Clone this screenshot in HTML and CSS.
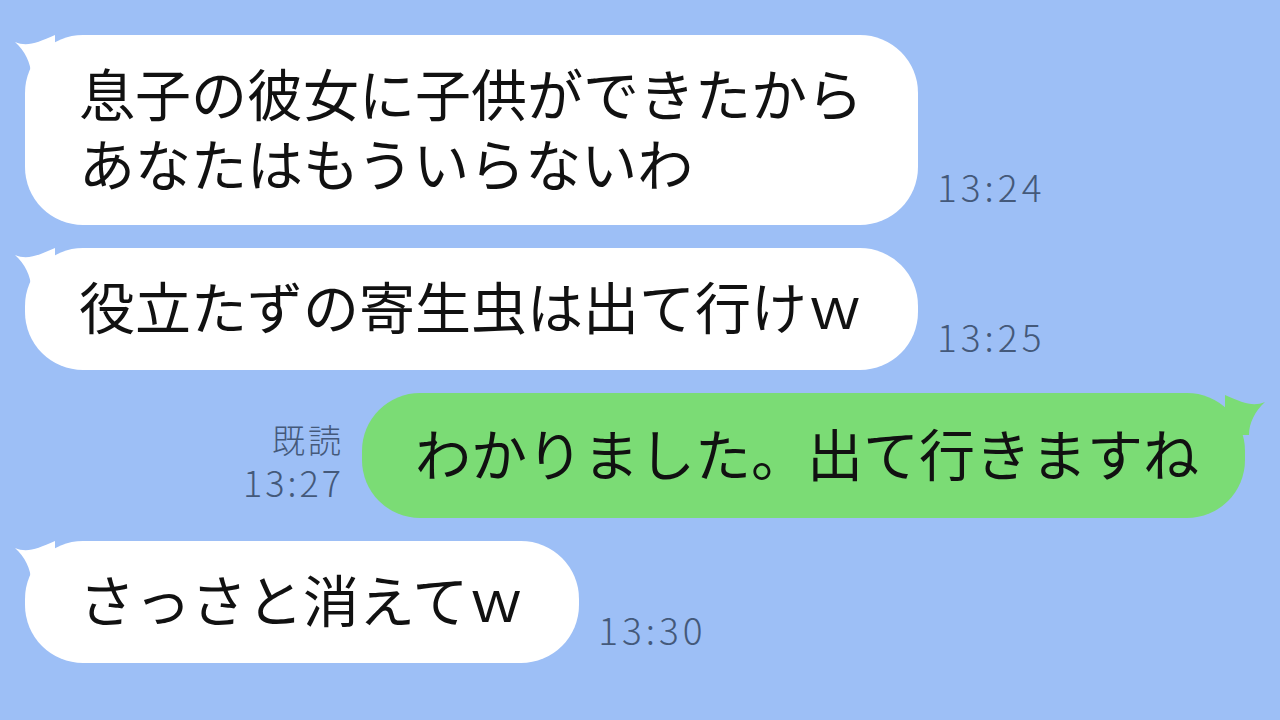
FILE: index.html
```html
<!DOCTYPE html>
<html lang="ja">
<head>
  <meta charset="UTF-8">
  <title>トーク</title>
  <link rel="stylesheet" href="styles.css">
</head>
<body>

  <div class="chat">
    <!-- 相手 -->
    <div class="row">
      <div class="bubble left two">
        <svg class="tail tail-l" width="50" height="50" viewBox="0 0 50 50">
          <path d="M0 7 C12 12 22 8 40 0 L40 40 L16 40 C16 28 10 16 0 7 Z"></path>
        </svg>
        <p>息子の彼女に子供ができたから<br>あなたはもういらないわ</p>
      </div>
      <div class="meta high"><span>13:24</span></div>
    </div>

    <div class="row">
      <div class="bubble left">
        <svg class="tail tail-l" width="50" height="50" viewBox="0 0 50 50">
          <path d="M0 7 C12 12 22 8 40 0 L40 40 L16 40 C16 28 10 16 0 7 Z"></path>
        </svg>
        <p>役立たずの寄生虫は出て行けｗ</p>
      </div>
      <div class="meta"><span>13:25</span></div>
    </div>

    <!-- 自分 -->
    <div class="row mine">
      <div class="meta">
        <span class="read">既読</span>
        <span>13:27</span>
      </div>
      <div class="bubble right">
        <svg class="tail tail-r" width="50" height="50" viewBox="0 0 50 50">
          <path d="M50 7 C38 12 28 8 10 0 L10 40 L34 40 C34 28 40 16 50 7 Z"></path>
        </svg>
        <p>わかりました。出て行きますね</p>
      </div>
    </div>

    <div class="row">
      <div class="bubble left">
        <svg class="tail tail-l" width="50" height="50" viewBox="0 0 50 50">
          <path d="M0 7 C12 12 22 8 40 0 L40 40 L16 40 C16 28 10 16 0 7 Z"></path>
        </svg>
        <p>さっさと消えてｗ</p>
      </div>
      <div class="meta"><span>13:30</span></div>
    </div>
  </div>

</body>
</html>
```

FILE: styles.css
```css
html,
body{
  margin: 0;
  height: 100%;
}

body{
  background: #9dbff6;
  font-family: "Noto Sans CJK JP", "Noto Sans", sans-serif;
  overflow: hidden;
}

.chat{
  padding: 35px 35px 0 25px;
  display: flex;
  flex-direction: column;
  gap: 23px;
}

.row{
  display: flex;
  align-items: flex-end;
}

.row.mine{
  justify-content: flex-end;
}

.bubble{
  position: relative;
  border-radius: 58px;
  padding: 22px 55px 30px 54px;
}

.bubble p{
  margin: 0;
  font-size: 56px;
  line-height: 70px;
  color: #111;
  white-space: nowrap;
}

.bubble.left{
  background: #fff;
}

.bubble.two{
  padding-bottom: 28px;
}

.bubble.right{
  background: #7bdc75;
  padding: 24px 46px 31px 53px;
}

/* しっぽ */
.tail{
  position: absolute;
  top: 0;
}

.tail-l{
  left: -10px;
  fill: #fff;
}

.tail-r{
  right: -20px;
  top: 2px;
  fill: #7bdc75;
}

.meta{
  display: flex;
  flex-direction: column;
  align-items: flex-end;
  color: #44597a;
  font-size: 37px;
  font-weight: 300;
  line-height: 42px;
  letter-spacing: 4px;
  margin: 0 0 13px 19px;
}

.meta.high{
  margin-bottom: 18px;
}

.row.mine .meta{
  margin: 0 18px 16px 0;
  font-size: 36px;
  letter-spacing: 3px;
}

.read{
  font-size: 33px;
}
```
